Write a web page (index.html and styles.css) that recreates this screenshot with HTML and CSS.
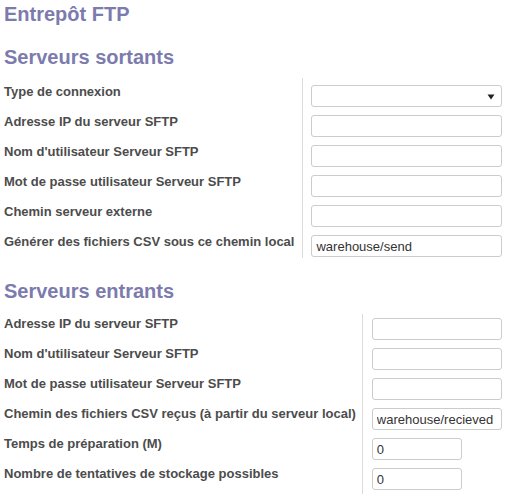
FILE: index.html
```html
<!DOCTYPE html>
<html lang="fr">
<head>
<meta charset="utf-8">
<title>Entrepôt FTP</title>
<link rel="stylesheet" href="styles.css">
</head>
<body>
<h1 class="title">Entrepôt FTP</h1>

<h2 class="section-title section-title--first">Serveurs sortants</h2>
<div class="form form--out">
  <div class="label">Type de connexion</div>
  <div class="field"><div class="select wide"><svg class="caret" width="8" height="6" viewBox="0 0 8 6"><path d="M0.5 0.5 H7.5 L4 5.5 Z" fill="#222"/></svg></div></div>

  <div class="label">Adresse IP du serveur SFTP</div>
  <div class="field"><input class="input wide" type="text" value=""></div>

  <div class="label">Nom d'utilisateur Serveur SFTP</div>
  <div class="field"><input class="input wide" type="text" value=""></div>

  <div class="label">Mot de passe utilisateur Serveur SFTP</div>
  <div class="field"><input class="input wide" type="text" value=""></div>

  <div class="label">Chemin serveur externe</div>
  <div class="field"><input class="input wide" type="text" value=""></div>

  <div class="label">Générer des fichiers CSV sous ce chemin local</div>
  <div class="field"><input class="input wide" type="text" value="warehouse/send"></div>
</div>

<h2 class="section-title section-title--second">Serveurs entrants</h2>
<div class="form form--in">
  <div class="label">Adresse IP du serveur SFTP</div>
  <div class="field"><input class="input medium" type="text" value=""></div>

  <div class="label">Nom d'utilisateur Serveur SFTP</div>
  <div class="field"><input class="input medium" type="text" value=""></div>

  <div class="label">Mot de passe utilisateur Serveur SFTP</div>
  <div class="field"><input class="input medium" type="text" value=""></div>

  <div class="label">Chemin des fichiers CSV reçus (à partir du serveur local)</div>
  <div class="field"><input class="input medium" type="text" value="warehouse/recieved"></div>

  <div class="label">Temps de préparation (M)</div>
  <div class="field"><input class="input narrow" type="text" value="0"></div>

  <div class="label">Nombre de tentatives de stockage possibles</div>
  <div class="field"><input class="input narrow" type="text" value="0"></div>
</div>
</body>
</html>
```

FILE: styles.css
```css
html, body {
  margin: 0;
  padding: 0;
  background: #ffffff;
}

body {
  padding: 0 4px;
  font-family: "Liberation Sans", Arial, sans-serif;
  color: #4c4c4c;
}

.title,
.section-title {
  font-size: 20px;
  line-height: 22px;
  font-weight: bold;
  color: #7c7bad;
  margin: 0;
}

.title {
  margin-top: 3px;
}

.section-title--first {
  margin-top: 21px;
  margin-bottom: 10px;
}

.section-title--second {
  margin-top: 22px;
  margin-bottom: 12px;
}

.form {
  display: grid;
  grid-template-columns: max-content max-content;
  grid-auto-rows: 30px;
}

.label {
  font-size: 13px;
  line-height: 18px;
  font-weight: bold;
  color: #4c4c4c;
  padding-right: 8px;
  white-space: nowrap;
}

.field {
  border-left: 1px solid #dcdcdc;
  padding-left: 8px;
}

.form--out .label {
  padding-top: 5px;
}

.form--out .field {
  padding-top: 7px;
}

.form--in .label {
  padding-top: 1px;
  padding-right: 6px;
}

.form--in .field {
  padding-top: 4px;
  padding-left: 9px;
}

.input,
.select {
  box-sizing: border-box;
  display: block;
  height: 22px;
  margin: 0;
  border: 1px solid #cccccc;
  border-radius: 3px;
  background: #ffffff;
  padding: 0 4px;
  font-family: "Liberation Sans", Arial, sans-serif;
  font-size: 13px;
  line-height: 20px;
  color: #333333;
  outline: none;
}

.select {
  display: flex;
  align-items: center;
  justify-content: flex-end;
  padding-right: 6px;
}

.caret {
  display: block;
  margin-top: 1px;
}

.wide {
  width: 191px;
}

.medium {
  width: 130px;
}

.narrow {
  width: 90px;
}
```
